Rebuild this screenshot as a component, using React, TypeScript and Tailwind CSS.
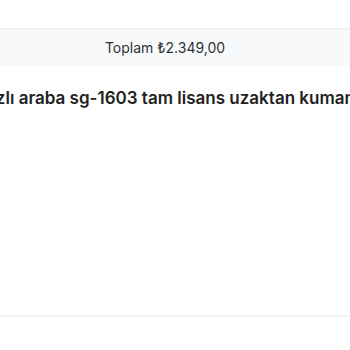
import React from 'react';

export default function App() {
  return (
    <div className="w-[350px] h-[350px] bg-white overflow-hidden flex flex-col" style={{ fontFamily: 'Inter, "Noto Sans", sans-serif' }}>
      <div className="h-[28px]" />
      <div className="h-[38px] bg-[#f8f9fa] border-t border-[#eeeeee] flex items-center justify-center pr-[20px] text-[14px] text-[#333]">
        Toplam ₺2.349,00
      </div>
      <div className="mt-[20px] flex justify-center whitespace-nowrap pl-[4px]">
        <h1 className="text-[17px] font-semibold text-[#222] leading-[24px]">Hızlı araba sg-1603 tam lisans uzaktan kumanda</h1>
      </div>
      <div className="flex-1" />
      <div className="h-[2px] bg-[#f2f2f2] mb-[33px]" />
    </div>
  );
}
